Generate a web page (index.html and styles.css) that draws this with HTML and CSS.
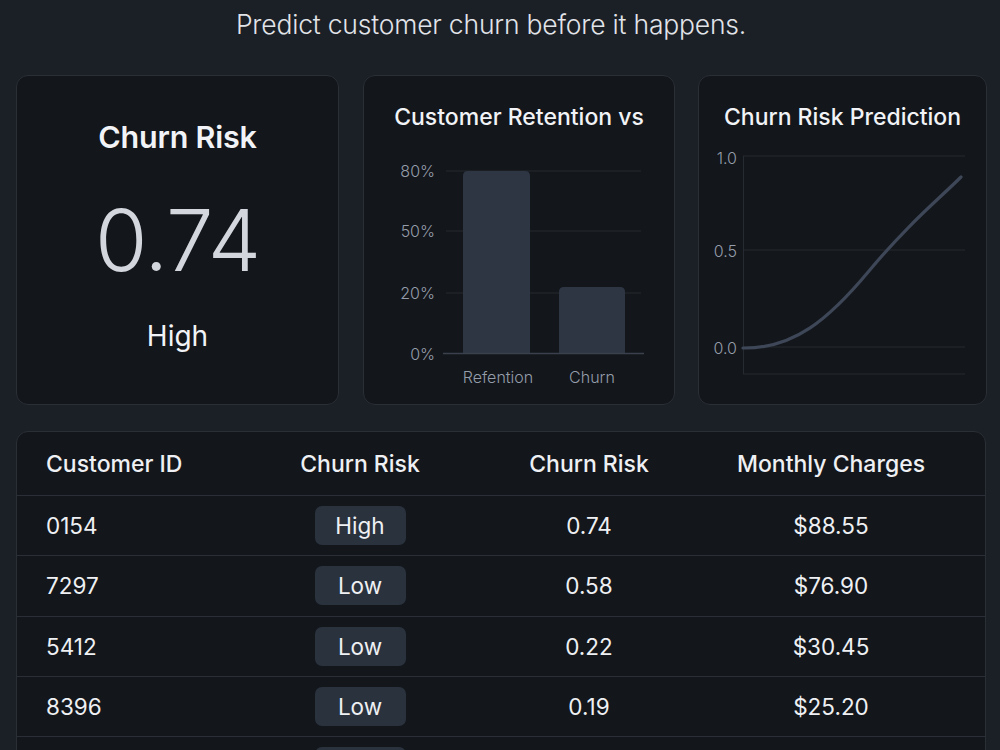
FILE: index.html
```html
<!DOCTYPE html>
<html lang="en">
<head>
<meta charset="utf-8">
<title>Churn Predictor</title>
<link rel="stylesheet" href="styles.css">
</head>
<body>
<main class="page">
  <p class="tagline">Predict customer churn before it happens.</p>

  <section class="cards">
    <article class="card score-card">
      <h2 class="score-title">Churn Risk</h2>
      <div class="score-value">0.74</div>
      <div class="score-level">High</div>
    </article>

    <article class="card chart-card">
      <h3 class="card-title">Customer Retention vs</h3>
      <svg class="chart" width="312" height="260" viewBox="0 0 312 260">
        <g class="grid">
          <line x1="82" y1="30" x2="277" y2="30"/>
          <line x1="82" y1="90" x2="277" y2="90"/>
          <line x1="82" y1="152" x2="277" y2="152"/>
        </g>
        <g class="axis-labels" text-anchor="end">
          <text x="71" y="36">80%</text>
          <text x="71" y="96">50%</text>
          <text x="71" y="158">20%</text>
          <text x="71" y="219">0%</text>
        </g>
        <path class="bar" d="M99 212 V35 Q99 30 104 30 H161 Q166 30 166 35 V212 Z"/>
        <path class="bar" d="M195 212 V151 Q195 146 200 146 H256 Q261 146 261 151 V212 Z"/>
        <line class="baseline" x1="79" y1="212.5" x2="280" y2="212.5"/>
        <g class="axis-labels" text-anchor="middle">
          <text x="134" y="242">Refention</text>
          <text x="228" y="242">Churn</text>
        </g>
      </svg>
    </article>

    <article class="card chart-card">
      <h3 class="card-title">Churn Risk Prediction</h3>
      <svg class="chart" width="288" height="260" viewBox="0 0 288 260">
        <g class="grid">
          <line x1="44" y1="15" x2="266" y2="15"/>
          <line x1="44" y1="109" x2="266" y2="109"/>
          <line x1="44" y1="206" x2="266" y2="206"/>
          <line x1="44" y1="233" x2="266" y2="233"/>
          <line x1="44.5" y1="15" x2="44.5" y2="233"/>
        </g>
        <g class="axis-labels" text-anchor="end">
          <text x="38" y="23">1.0</text>
          <text x="38" y="116">0.5</text>
          <text x="38" y="213">0.0</text>
        </g>
        <path class="curve" d="M44 207 C 95 208 130 178 170 130 S 240 58 262 36"/>
      </svg>
    </article>
  </section>

  <section class="table">
    <div class="row head">
      <div class="cell id">Customer ID</div>
      <div class="cell">Churn Risk</div>
      <div class="cell">Churn Risk</div>
      <div class="cell">Monthly Charges</div>
    </div>
    <div class="row">
      <div class="cell id">0154</div>
      <div class="cell"><span class="badge">High</span></div>
      <div class="cell">0.74</div>
      <div class="cell">$88.55</div>
    </div>
    <div class="row">
      <div class="cell id">7297</div>
      <div class="cell"><span class="badge">Low</span></div>
      <div class="cell">0.58</div>
      <div class="cell">$76.90</div>
    </div>
    <div class="row">
      <div class="cell id">5412</div>
      <div class="cell"><span class="badge">Low</span></div>
      <div class="cell">0.22</div>
      <div class="cell">$30.45</div>
    </div>
    <div class="row">
      <div class="cell id">8396</div>
      <div class="cell"><span class="badge">Low</span></div>
      <div class="cell">0.19</div>
      <div class="cell">$25.20</div>
    </div>
    <div class="row">
      <div class="cell id">2631</div>
      <div class="cell"><span class="badge">Low</span></div>
      <div class="cell">0.12</div>
      <div class="cell">$19.85</div>
    </div>
  </section>
</main>
</body>
</html>
```

FILE: styles.css
```css
* { box-sizing: border-box; }

html, body {
  margin: 0;
  background: #1b1f26;
  color: #eef0f3;
  font-family: Inter, "Noto Sans", "Liberation Sans", sans-serif;
}

.page {
  padding: 0 14px 0 16px;
}

.tagline {
  margin: 0;
  height: 75px;
  padding: 8px 20px 0 0;
  text-align: center;
  font-size: 26.5px;
  font-weight: 300;
  line-height: 32px;
  color: #e1e4e9;
  letter-spacing: -0.2px;
}

/* summary cards */
.cards {
  display: grid;
  grid-template-columns: 323px 312px 288px;
  column-gap: 24px;
  height: 330px;
}
.cards .card:last-child { margin-left: -1px; }

.card {
  background: #13161b;
  border: 1px solid #2a2e35;
  border-radius: 12px;
}

.score-card {
  display: flex;
  flex-direction: column;
  align-items: center;
}
.score-title {
  margin: 43px 0 0;
  font-size: 30.5px;
  font-weight: 600;
  line-height: 36px;
  color: #f1f3f6;
  letter-spacing: -0.2px;
}
.score-value {
  margin-top: 36px;
  font-size: 85px;
  font-weight: 300;
  line-height: 100px;
  color: #d3d7dd;
  letter-spacing: -1px;
}
.score-level {
  margin-top: 28px;
  font-size: 28px;
  font-weight: 400;
  line-height: 34px;
  color: #f1f3f6;
}

.chart-card {
  display: flex;
  flex-direction: column;
  align-items: center;
}
.card-title {
  margin: 27px 0 0;
  font-size: 23px;
  font-weight: 500;
  line-height: 28px;
  color: #f1f3f6;
  white-space: nowrap;
}
.chart {
  display: block;
  margin-top: 10px;
  align-self: flex-start;
}
.grid line {
  stroke: #262a31;
  stroke-width: 1;
}
.baseline {
  stroke: #3a414c;
  stroke-width: 1.5;
}
.bar { fill: #2e3644; }
.axis-labels text {
  font-family: Inter, "Noto Sans", sans-serif;
  font-size: 16px;
  font-weight: 300;
  fill: #959daa;
}
.curve {
  fill: none;
  stroke: #3e4757;
  stroke-width: 3.2;
  stroke-linecap: round;
}

/* customer table */
.table {
  margin-top: 26px;
  background: #13161b;
  border: 1px solid #2a2e35;
  border-radius: 12px;
  overflow: hidden;
}
.row {
  display: grid;
  grid-template-columns: 199px 230px 228px 256px;
  padding-left: 29px;
  align-items: center;
  height: 60.3px;
  border-top: 1px solid #2a2f37;
  font-size: 22.5px;
  color: #eef0f3;
}
.row.head {
  height: 63px;
  border-top: none;
  font-size: 23px;
  font-weight: 500;
}
.cell {
  text-align: center;
  white-space: nowrap;
}
.cell.id { text-align: left; }
.badge {
  display: inline-block;
  width: 91px;
  height: 39px;
  line-height: 39px;
  border-radius: 7px;
  background: #2a323e;
  color: #eef0f3;
}
```
